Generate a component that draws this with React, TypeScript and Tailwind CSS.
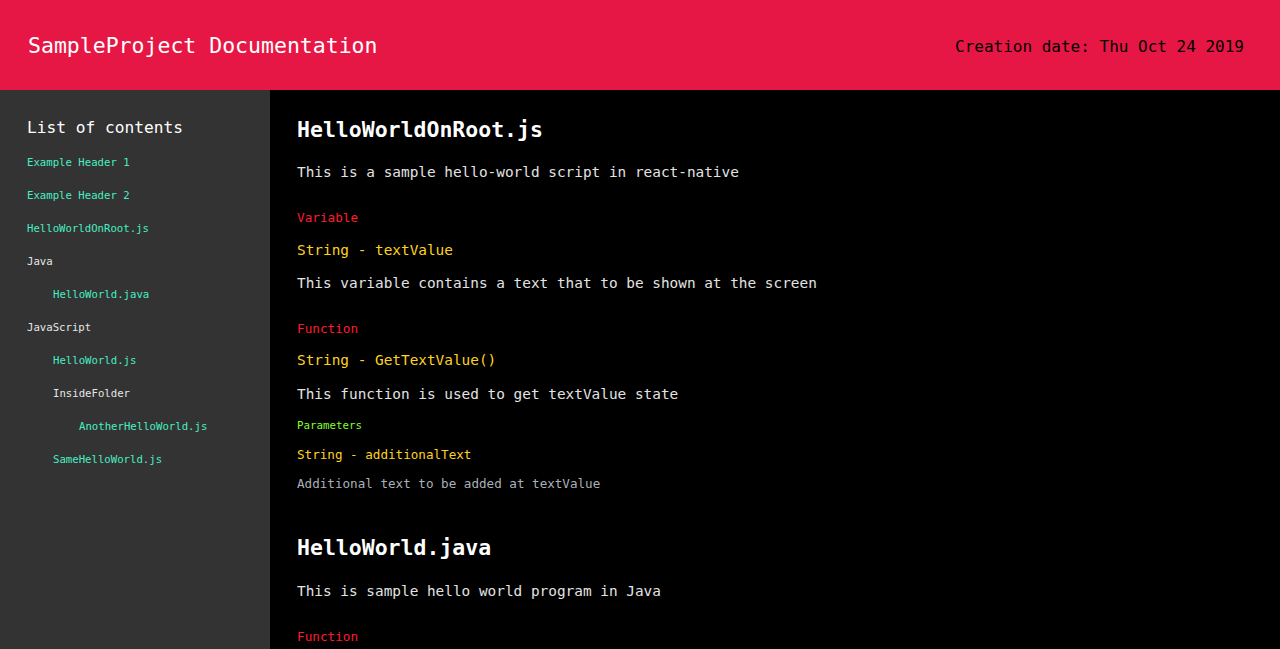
import React from "react";

const mono = { fontFamily: '"DejaVu Sans Mono", "Liberation Mono", monospace' };

type Item = { label: string; level: number; link: boolean };

const items: Item[] = [
  { label: "Example Header 1", level: 0, link: true },
  { label: "Example Header 2", level: 0, link: true },
  { label: "HelloWorldOnRoot.js", level: 0, link: true },
  { label: "Java", level: 0, link: false },
  { label: "HelloWorld.java", level: 1, link: true },
  { label: "JavaScript", level: 0, link: false },
  { label: "HelloWorld.js", level: 1, link: true },
  { label: "InsideFolder", level: 1, link: false },
  { label: "AnotherHelloWorld.js", level: 2, link: true },
  { label: "SameHelloWorld.js", level: 1, link: true },
];

const indent = ["pl-0", "pl-[26px]", "pl-[52px]"];

export default function App() {
  return (
    <div className="h-screen w-full flex flex-col overflow-hidden bg-black" style={mono}>
      <header className="h-[90px] shrink-0 bg-[#e71745] flex items-center justify-between pl-[28px] pr-[36px]">
        <div className="text-white text-[21.5px] leading-[24px] pt-[2px]">SampleProject Documentation</div>
        <div className="text-black text-[16px] leading-[20px] pt-[3px]">Creation date: Thu Oct 24 2019</div>
      </header>
      <div className="flex-1 flex min-h-0">
        <aside className="w-[270px] shrink-0 bg-[#333333] pt-[28px] pl-[27px]">
          <div className="text-white text-[16.2px] leading-[20px]">List of contents</div>
          <div className="mt-[15px] flex flex-col gap-[13px]">
            {items.map((it, i) => (
              <div
                key={i}
                className={`text-[10.67px] leading-[20px] ${indent[it.level]} ${it.link ? "text-[#48eec3]" : "text-[#e6e6e6]"}`}
              >
                {it.label}
              </div>
            ))}
          </div>
        </aside>
        <main className="flex-1 pt-[30px] pl-[27px] text-[#e3e3e3]">
          <h1 className="text-white font-bold text-[21.5px] leading-[20px]">HelloWorldOnRoot.js</h1>
          <p className="mt-[22px] text-[14.4px] leading-[20px]">This is a sample hello-world script in react-native</p>
          <div className="mt-[26px] text-[#ff1a2e] text-[12.7px] leading-[20px]">Variable</div>
          <div className="mt-[12px] text-[#ffd21f] text-[14.4px] leading-[20px]">String - textValue</div>
          <p className="mt-[13px] text-[14.4px] leading-[20px]">This variable contains a text that to be shown at the screen</p>
          <div className="mt-[26px] text-[#ff1a2e] text-[12.7px] leading-[20px]">Function</div>
          <div className="mt-[11px] text-[#ffd21f] text-[14.4px] leading-[20px]">String - GetTextValue()</div>
          <p className="mt-[14px] text-[14.4px] leading-[20px]">This function is used to get textValue state</p>
          <div className="mt-[12px] text-[#86ff2c] text-[10.8px] leading-[20px]">Parameters</div>
          <div className="mt-[9px] text-[#ffd21f] text-[12.6px] leading-[20px]">String - additionalText</div>
          <p className="mt-[9px] text-[#a9b0b6] text-[12.6px] leading-[20px]">Additional text to be added at textValue</p>
          <h1 className="mt-[44px] text-white font-bold text-[21.5px] leading-[20px]">HelloWorld.java</h1>
          <p className="mt-[23px] text-[14.4px] leading-[20px]">This is sample hello world program in Java</p>
          <div className="mt-[26px] text-[#ff1a2e] text-[12.7px] leading-[20px]">Function</div>
        </main>
      </div>
    </div>
  );
}
